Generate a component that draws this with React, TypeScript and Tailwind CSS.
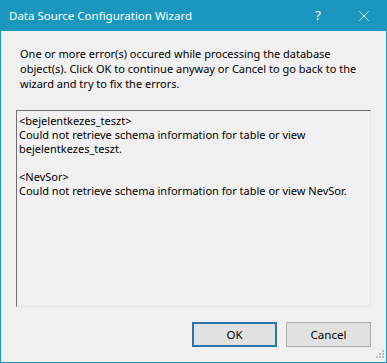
import React from 'react'

const font = { fontFamily: '"Noto Sans", "Segoe UI", sans-serif' }

const Grip = () => (
  <svg width="10" height="10" viewBox="0 0 10 10" className="absolute right-[2px] bottom-[2px]">
    {[
      [8, 0],
      [8, 3],
      [5, 3],
      [8, 6],
      [5, 6],
      [2, 6],
    ].map(([x, y], i) => (
      <rect key={i} x={x} y={y} width="2" height="2" fill="#bdbdbd" />
    ))}
  </svg>
)

export default function App() {
  return (
    <div
      className="relative w-[387px] h-[363px] bg-[#f0f0f0] border-x border-b border-[#1b97bf] flex flex-col text-[11px] text-black whitespace-nowrap"
      style={font}
    >
      {/* title bar */}
      <div className="h-[31px] shrink-0 -mx-px bg-[#1b97bf] flex items-center text-white text-[11.5px]">
        <div className="pl-[9px] flex-1 leading-none">Data Source Configuration Wizard</div>
        <div className="w-[46px] text-center text-[13px] leading-none">?</div>
        <div className="w-[46px] flex justify-center">
          <svg width="10" height="10" viewBox="0 0 10 10">
            <path d="M0.5 0.5 L9.5 9.5 M9.5 0.5 L0.5 9.5" stroke="white" strokeWidth="1" />
          </svg>
        </div>
      </div>

      <div className="flex-1 flex flex-col px-[15px]">
        <p className="pl-[4px] pt-[15px] leading-[15px] h-[60px] shrink-0">
          One or more error(s) occured while processing the database
          <br />
          object(s). Click OK to continue anyway or Cancel to go back to the
          <br />
          wizard and try to fix the errors.
        </p>

        <div className="mt-[19px] h-[197px] shrink-0 border-t border-l border-[#6f6f6f] border-b border-r border-b-[#e3e3e3] border-r-[#e3e3e3] bg-[#f0f0f0] px-[2px] pt-[3px] leading-[14px] overflow-hidden">
          <div>&lt;bejelentkezes_teszt&gt;</div>
          <div>Could not retrieve schema information for table or view</div>
          <div>bejelentkezes_teszt.</div>
          <div className="h-[14px]" />
          <div>&lt;NevSor&gt;</div>
          <div>Could not retrieve schema information for table or view NevSor.</div>
        </div>

        <div className="flex justify-end gap-[9px] mt-[15px]">
          <button className="w-[85px] h-[25px] border-2 border-[#2a74b0] bg-[#e1e1e1] leading-none text-[11.5px]">
            OK
          </button>
          <button className="w-[85px] h-[25px] border border-[#adadad] bg-[#e1e1e1] leading-none text-[11.5px]">
            Cancel
          </button>
        </div>
      </div>
      <Grip />
    </div>
  )
}
